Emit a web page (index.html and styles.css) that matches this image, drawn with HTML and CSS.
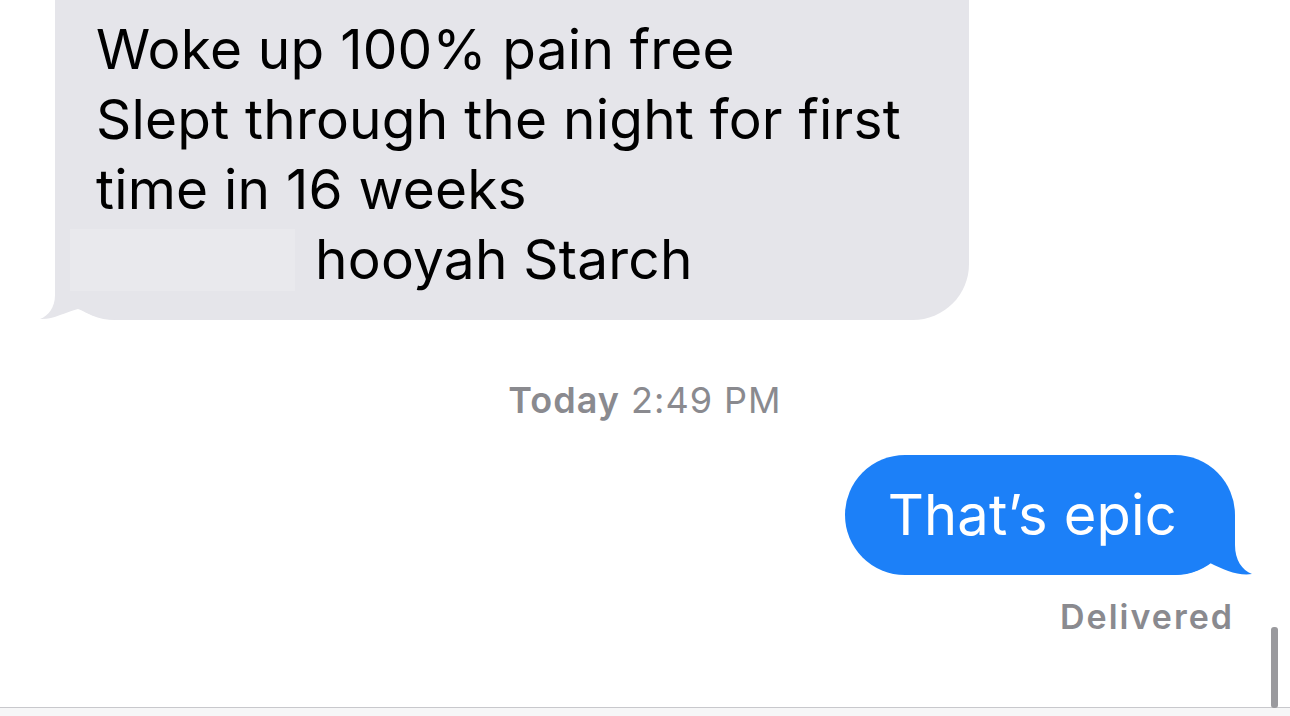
FILE: index.html
```html
<!DOCTYPE html>
<html lang="en">
<head>
	<meta charset="UTF-8">
	<meta name="viewport" content="width=device-width, initial-scale=1.0">
	<title>Messages</title>
	<link rel="stylesheet" href="styles.css">
</head>
<body>
	<div class="screen">
		<div class="thread">
			<div class="bubble them">
				<div class="text">
					<div>Woke up 100% pain free</div>
					<div>Slept through the night for first</div>
					<div>time in 16 weeks</div>
					<div><span class="hidden-name"></span>hooyah Starch</div>
				</div>
				<svg class="tail tail-them" width="80" height="70" viewBox="0 0 80 70">
					<path d="M15 0 L15 45 C15 58 8 66 0 69 C12 70 26 62 38 59 C48 63 60 70 80 70 L80 0 Z"/>
				</svg>
			</div>

			<div class="stamp"><b>Today</b> 2:49 PM</div>

			<div class="bubble me">
				<span class="text">That’s epic</span>
				<svg class="tail tail-me" width="83" height="60" viewBox="0 0 83 60">
					<path d="M65 0 L65 30 C65 45 72 55 82 59 C68 61 54 55 40 48 C30 55 20 60 0 60 L0 0 Z"/>
				</svg>
			</div>
			<div class="status">Delivered</div>
		</div>
		<div class="composer"></div>
		<div class="scrollbar"></div>
	</div>
</body>
</html>
```

FILE: styles.css
```css
body{
	margin: 0;
	background-color: #fff;
	font-family: Inter, "Liberation Sans", Arial, sans-serif;
}
.screen{
	position: relative;
	height: 716px;
	overflow: hidden;
	display: flex;
	flex-direction: column;
}
.thread{
	flex: 1;
	display: flex;
	flex-direction: column;
}
.bubble{
	position: relative;
	font-size: 55px;
	letter-spacing: 0.2px;
}
.bubble .text{
	position: relative;
	z-index: 1;
}
.them{
	width: 914px;
	box-sizing: border-box;
	margin-left: 55px;
	padding: 14px 40px 26px 41px;
	line-height: 70px;
	color: #000;
	background-color: #e5e5ea;
	border-radius: 0 0 56px 60px;
}
.hidden-name{
	display: inline-block;
	width: 225px;
	height: 62px;
	margin-left: -26px;
	margin-right: 20px;
	vertical-align: -12px;
	background-color: #e9e9ed;
}
.tail{
	position: absolute;
	bottom: 0;
}
.tail-them{
	left: -15px;
	fill: #e5e5ea;
}
.tail-me{
	right: -18px;
	fill: #1c80f8;
}
.stamp{
	margin-top: 60px;
	text-align: center;
	font-size: 36px;
	line-height: 40px;
	letter-spacing: 1px;
	color: #8a8a8f;
}
.stamp b{
	font-weight: 600;
}
.me{
	align-self: flex-end;
	margin-top: 35px;
	margin-right: 55px;
	height: 120px;
	padding: 0 58px 0 43px;
	font-size: 56px;
	line-height: 120px;
	color: #fff;
	background-color: #1c80f8;
	border-radius: 60px;
}
.status{
	align-self: flex-end;
	margin-top: 24px;
	margin-right: 56px;
	font-size: 34px;
	line-height: 36px;
	letter-spacing: 2px;
	font-weight: 600;
	color: #8a8a8f;
}
.composer{
	height: 8px;
	border-top: 1px solid #c8c8cc;
	background-color: #f6f6f7;
}
.scrollbar{
	position: absolute;
	right: 12px;
	bottom: 8px;
	width: 7px;
	height: 81px;
	border-radius: 3px;
	background-color: #9a9a9e;
}
```
